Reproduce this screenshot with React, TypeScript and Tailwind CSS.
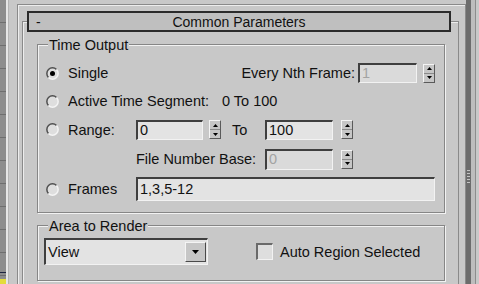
import type { ReactNode } from 'react';

const sunken =
  'border-t-2 border-l-2 border-r border-b border-[#3f3f3f] border-r-[#f2f2f2] border-b-[#f2f2f2]';

function Radio({ on }: { on?: boolean }) {
  return (
    <svg width="13" height="13" viewBox="0 0 13 13">
      <circle cx="6.5" cy="6.5" r="5.6" fill="#dedede" />
      <path d="M2.5 10.5A5.6 5.6 0 0 1 10.5 2.5" stroke="#4f4f4f" strokeWidth="1.5" fill="none" />
      <path d="M10.5 2.5A5.6 5.6 0 0 1 2.5 10.5" stroke="#f4f4f4" strokeWidth="1.5" fill="none" />
      {on && <circle cx="6.5" cy="6.5" r="2.5" fill="#000" />}
    </svg>
  );
}

function Spinner({ className = '' }: { className?: string }) {
  return (
    <div
      className={`flex h-[19px] w-[12px] shrink-0 flex-col border border-t-[#f4f4f4] border-l-[#f4f4f4] border-r-[#5a5a5a] border-b-[#5a5a5a] bg-[#c6c6c6] ${className}`}
    >
      <div className="flex flex-1 items-center justify-center border-b border-b-[#8a8a8a]">
        <svg width="5" height="3" viewBox="0 0 5 3">
          <path d="M0 3L2.5 0L5 3Z" fill="#000" />
        </svg>
      </div>
      <div className="flex flex-1 items-center justify-center">
        <svg width="5" height="3" viewBox="0 0 5 3">
          <path d="M0 0L5 0L2.5 3Z" fill="#000" />
        </svg>
      </div>
    </div>
  );
}

function Field({ value, className = '', disabled }: { value: string; className?: string; disabled?: boolean }) {
  return (
    <div
      className={`flex shrink-0 items-center pl-[2px] leading-none ${sunken} ${
        disabled ? 'bg-[#dadada] text-[#a3a3a3]' : 'bg-[#e3e3e3]'
      } ${className}`}
    >
      {value}
    </div>
  );
}

function Group({ title, className = '', children }: { title: string; className?: string; children: ReactNode }) {
  return (
    <div className={`border border-[#868686] shadow-[inset_1px_1px_0_#f2f2f2,1px_1px_0_#f2f2f2] ${className}`}>
      <div className="-mt-[8px] ml-[10px] w-fit bg-[#c8c8c8] px-[1px] leading-[16px]">{title}</div>
      {children}
    </div>
  );
}

export default function App() {
  return (
    <div className="flex h-[284px] w-[479px] overflow-hidden bg-[#c8c8c8] font-['Liberation_Sans',Arial,sans-serif] text-[14.5px] leading-[16px] text-[#111]">
      {/* edge of the viewport */}
      <div className="flex w-[9px] shrink-0">
        <div className="flex w-[6px] flex-col bg-[repeating-linear-gradient(to_bottom,#8d8d8d_0px,#8d8d8d_22px,#6e6e6e_22px,#6e6e6e_23px)]">
          <div className="mt-[272px] h-[1px] bg-[#1d2440]" />
          <div className="mt-[6px] flex-1 bg-[#e4dc3c]" />
        </div>
        <div className="w-[2px] bg-[#e6e6e6]" />
        <div className="w-[1px] bg-[#b4b4b4]" />
      </div>

      <div className="w-[457px] shrink-0 pl-[8px] pt-[4px]">
        <div className="h-full border-l border-t border-r border-[#8a8a8a] shadow-[inset_1px_1px_0_#ededed]">
          {/* rollout */}
          <div className="mt-[16px] ml-[4px] mr-[6px] h-[300px] border-l border-t border-r border-[#8a8a8a] shadow-[inset_1px_1px_0_#ededed]">
            <div className="-mt-[11px] ml-[4px] mr-[7px] grid h-[21px] grid-cols-[24px_1fr_24px] items-center border-2 border-[#2b2b2b] bg-[#bfbfbf] text-[14px]">
              <span className="pl-[7px]">-</span>
              <span className="text-center">Common Parameters</span>
              <span />
            </div>

            <Group title="Time Output" className="mt-[12px] ml-[14px] mr-[13px] pb-[8px]">
              <div className="mt-[6px] pl-[8px] pr-[9px]">
                <div className="flex h-[28px] items-center">
                  <div className="w-[22px]">
                    <Radio on />
                  </div>
                  <span className="flex-1">Single</span>
                  <span className="mr-[3px]">Every Nth Frame:</span>
                  <Field value="1" disabled className="h-[20px] w-[59px]" />
                  <Spinner className="ml-[6px]" />
                </div>

                <div className="flex h-[28px] items-center">
                  <div className="w-[22px]">
                    <Radio />
                  </div>
                  <span className="w-[154px]">Active Time Segment:</span>
                  <span>0 To 100</span>
                </div>

                <div className="flex h-[29px] items-center">
                  <div className="w-[22px]">
                    <Radio />
                  </div>
                  <span className="w-[68px]">Range:</span>
                  <Field value="0" className="h-[20px] w-[67px]" />
                  <Spinner className="ml-[6px]" />
                  <span className="ml-[11px] w-[33px]">To</span>
                  <Field value="100" className="h-[20px] w-[68px]" />
                  <Spinner className="ml-[8px]" />
                </div>

                <div className="flex h-[30px] items-center">
                  <div className="w-[90px]" />
                  <span className="w-[129px]">File Number Base:</span>
                  <Field value="0" disabled className="h-[21px] w-[68px]" />
                  <Spinner className="ml-[8px]" />
                </div>

                <div className="flex h-[30px] items-center">
                  <div className="w-[22px]">
                    <Radio />
                  </div>
                  <span className="w-[68px]">Frames</span>
                  <Field value="1,3,5-12" className="h-[24px] flex-1" />
                </div>
              </div>
            </Group>

            <Group title="Area to Render" className="mt-[12px] ml-[14px] mr-[13px] pb-[15px]">
              <div className="mt-[4px] flex items-center pl-[6px]">
                <div className={`flex h-[27px] w-[164px] items-center bg-[#e3e3e3] ${sunken}`}>
                  <span className="flex-1 pl-[2px]">View</span>
                  <div className="mr-[1px] flex h-[20px] w-[21px] items-center justify-center border border-t-[#f4f4f4] border-l-[#f4f4f4] border-r-[#4a4a4a] border-b-[#4a4a4a] bg-[#c6c6c6]">
                    <svg width="7" height="4" viewBox="0 0 7 4">
                      <path d="M0 0L7 0L3.5 4Z" fill="#000" />
                    </svg>
                  </div>
                </div>
                <div className="ml-[48px] h-[17px] w-[17px] border-t-2 border-l-2 border-r border-b border-[#6a6a6a] border-r-[#f2f2f2] border-b-[#f2f2f2] bg-[#dedede]" />
                <span className="ml-[7px]">Auto Region Selected</span>
              </div>
            </Group>
          </div>
        </div>
      </div>

      {/* panel scroll strip */}
      <div className="flex w-[13px] shrink-0">
        <div className="flex w-[5px] flex-col items-center gap-[2px] bg-[#6c6c6c] pt-[170px]">
          <div className="h-[1px] w-[3px] bg-[#c4c4c4]" />
          <div className="h-[1px] w-[3px] bg-[#c4c4c4]" />
          <div className="h-[1px] w-[3px] bg-[#c4c4c4]" />
          <div className="h-[1px] w-[3px] bg-[#c4c4c4]" />
          <div className="h-[1px] w-[3px] bg-[#c4c4c4]" />
        </div>
        <div className="w-[4px] bg-[#bdbdbd]" />
        <div className="w-[1px] bg-[#8c8c8c]" />
        <div className="flex-1 bg-[#c8c8c8]" />
      </div>
    </div>
  );
}
